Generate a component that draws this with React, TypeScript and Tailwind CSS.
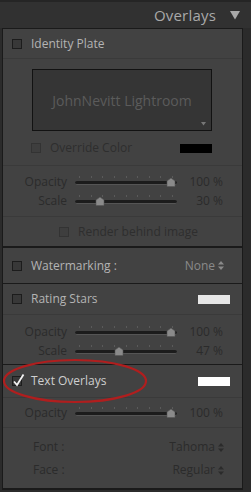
import React from 'react';

const font = { fontFamily: '"Open Sans", "Noto Sans", sans-serif' };

const Box = ({ checked = false, dim = false }: { checked?: boolean; dim?: boolean }) => (
  <div className={`relative w-[10px] h-[10px] shrink-0 border ${dim ? 'border-[#333] bg-[#3e3e3e]' : 'border-[#1c1c1c] bg-[#383838]'}`}>
    {checked && (
      <svg className="absolute -left-[1px] -top-[4px]" width="13" height="14" viewBox="0 0 13 14">
        <path d="M2 8.5 L5 12 L11.5 1.5" fill="none" stroke="#f2f2f2" strokeWidth="1.8" />
      </svg>
    )}
  </div>
);

const Updown = () => (
  <svg width="6" height="9" viewBox="0 0 6 9" className="ml-[3px]">
    <path d="M0 3.5 L3 0 L6 3.5 Z M0 5.5 L3 9 L6 5.5 Z" fill="currentColor" />
  </svg>
);

const Slider = ({ label, value, pos }: { label: string; value: string; pos: number }) => (
  <div className="flex items-center h-[19px] text-[12px] text-[#2b2b2b]">
    <div className="w-[64px] text-right">{label}</div>
    <div className="relative ml-[8px] w-[102px] h-[19px]">
      {/* tick marks */}
      <div className="absolute left-[4px] right-[4px] top-[4px] flex justify-between">
        {Array.from({ length: 9 }).map((_, i) => (
          <div key={i} className="w-[1px] h-[2px] bg-[#5a5a5a]" />
        ))}
      </div>
      <div className="absolute left-0 right-0 top-[9px] h-[4px] rounded-full bg-[#1c1c1c] border-b border-[#555]" />
      <svg className="absolute top-[6px]" style={{ left: pos - 5 }} width="10" height="9" viewBox="0 0 10 9">
        <path d="M5 0 L9 3 L9 8.5 L1 8.5 L1 3 Z" fill="#8a8a8a" stroke="#555" strokeWidth="0.6" />
      </svg>
    </div>
    <div className="w-[46px] text-right">{value}</div>
  </div>
);

export default function App() {
  return (
    <div className="w-[251px] h-[492px] bg-[#2b2b2b] overflow-hidden" style={font}>
      {/* Header */}
      <div className="h-[28px] bg-[#313131] border-t-2 border-[#252525] flex items-center justify-end pr-[11px]">
        <span className="text-[15px] text-[#a9a9a9] tracking-[0.2px]">Overlays</span>
        <svg className="ml-[14px]" width="10" height="9" viewBox="0 0 10 9">
          <path d="M0 0 L10 0 L5 8.5 Z" fill="#a9a9a9" />
        </svg>
      </div>

      <div className="relative ml-[2px] w-[241px] bg-[#424242] border-x border-[#1a1a1a] border-t border-[#1a1a1a] h-[460px]">
        {/* Identity Plate */}
        <div className="h-[30px] flex items-center pl-[9px] gap-[9px] border-b border-[#3a3a3a]">
          <Box />
          <span className="text-[12px] text-[#b4b4b4]">Identity Plate</span>
        </div>
        <div className="pt-[10px] pl-[29px]">
          <div className="relative w-[180px] h-[62px] bg-[#353535] border border-[#121212] flex items-center justify-center">
            <span className="text-[14px] text-[#5b5b5b]">JohnNevitt Lightroom</span>
            <svg className="absolute right-[5px] bottom-[4px]" width="5" height="4" viewBox="0 0 5 4">
              <path d="M0 0 L5 0 L2.5 3.5 Z" fill="#777" />
            </svg>
          </div>
        </div>
        <div className="h-[35px] flex items-center pl-[28px] pr-[30px] border-b border-[#3a3a3a]">
          <Box dim />
          <span className="ml-[9px] text-[12px] text-[#2e2e2e]">Override Color</span>
          <div className="ml-auto w-[32px] h-[9px] bg-black" />
        </div>
        <div className="pt-[6px] h-[51px] border-b border-[#3a3a3a]">
          <Slider label="Opacity" value="100 %" pos={96} />
          <Slider label="Scale" value="30 %" pos={25} />
        </div>
        <div className="h-[29px] flex items-center pl-[56px]">
          <Box dim />
          <span className="ml-[9px] text-[12px] text-[#2e2e2e]">Render behind image</span>
        </div>

        {/* Watermarking */}
        <div className="h-[37px] border-t-2 border-[#1a1a1a] flex items-center pl-[9px] pr-[18px]">
          <Box />
          <span className="ml-[9px] text-[12px] text-[#b4b4b4]">Watermarking :</span>
          <span className="ml-auto flex items-center text-[12px] text-[#8a8a8a]">None<Updown /></span>
        </div>

        {/* Rating Stars */}
        <div className="h-[32px] border-t border-[#1a1a1a] flex items-center pl-[9px] pr-[12px] border-b border-b-[#3a3a3a]">
          <Box />
          <span className="ml-[9px] text-[12px] text-[#b4b4b4]">Rating Stars</span>
          <div className="ml-auto w-[32px] h-[9px] bg-[#e6e6e6]" />
        </div>
        <div className="pt-[7px] h-[49px]">
          <Slider label="Opacity" value="100 %" pos={96} />
          <Slider label="Scale" value="47 %" pos={44} />
        </div>

        {/* Text Overlays */}
        <div className="h-[34px] border-t border-[#1a1a1a] flex items-center pl-[9px] pr-[12px] border-b border-b-[#3a3a3a]">
          <Box checked />
          <span className="ml-[9px] text-[12px] text-[#cfcfcf]">Text Overlays</span>
          <div className="ml-auto w-[32px] h-[9px] bg-white" />
        </div>
        <div className="h-[30px] flex items-center border-b border-[#3a3a3a]">
          <Slider label="Opacity" value="100 %" pos={96} />
        </div>
        <div className="pt-[9px] pl-[30px] pr-[18px] text-[12px] text-[#2b2b2b]">
          <div className="h-[20px] flex items-center">
            <span>Font :</span>
            <span className="ml-auto flex items-center">Tahoma<Updown /></span>
          </div>
          <div className="h-[23px] flex items-end pb-[1px]">
            <span>Face :</span>
            <span className="ml-auto flex items-center">Regular<Updown /></span>
          </div>
        </div>

        {/* red annotation ellipse */}
        <svg className="absolute -left-[2px] top-[328px] pointer-events-none" width="150" height="48" viewBox="0 0 150 48">
          <ellipse cx="74" cy="24" rx="71" ry="21" fill="none" stroke="#b01e1e" strokeWidth="2.2" />
        </svg>
      </div>
      <div className="ml-[2px] w-[241px] h-[2px] bg-[#1a1a1a]" />
    </div>
  );
}
